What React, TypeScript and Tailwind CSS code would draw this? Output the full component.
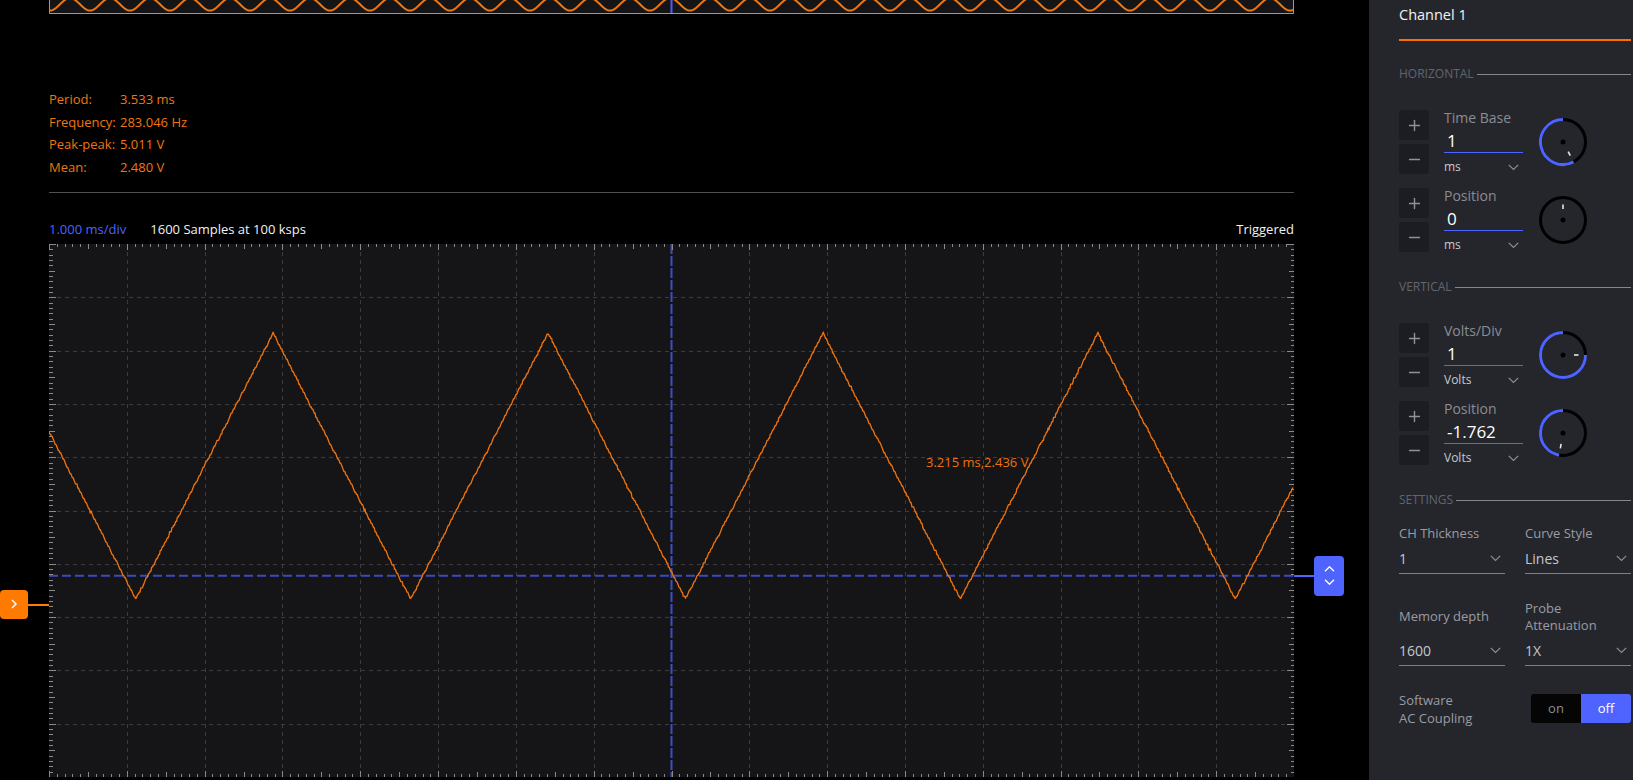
import { Plus, Minus } from 'lucide-react';

const W = 1245;
const H = 533;
const DX = W / 16;
const DY = H / 10;
const ZERO_Y = 360.5;

function buildWave() {
  let seed = 11;
  const rnd = () => {
    seed = (seed * 16807) % 2147483647;
    return seed / 2147483647;
  };
  const pts: string[] = [];
  for (let i = 0; i < 1600; i++) {
    const t = i * 0.01;
    let p = ((t - 1.114) / 3.533) % 1;
    if (p < 0) p += 1;
    const tri = p < 0.5 ? 2 * p : 2 - 2 * p;
    let v = 0.1 + 4.99 * tri + (rnd() - 0.5) * 0.035;
    v = Math.round(v / 0.039) * 0.039;
    pts.push(`${(t * DX).toFixed(2)},${(ZERO_Y - v * DY).toFixed(2)}`);
  }
  return pts.join(' ');
}

function buildMini() {
  const pts: string[] = [];
  for (let x = 0; x <= W; x += 1) {
    const phi = (2 * Math.PI * (x - 1)) / 40;
    pts.push(`${x},${(10.5 - 6.2 * (1 - Math.cos(phi))).toFixed(2)}`);
  }
  return pts.join(' ');
}

const wave = buildWave();
const mini = buildMini();

function Knob({ angle }: { angle: number }) {
  const c = 25;
  const r = 22.5;
  const rad = (a: number) => (a * Math.PI) / 180;
  const pt = (a: number, rr: number) => [c + rr * Math.cos(rad(a)), c + rr * Math.sin(rad(a))];
  const sweep = (((270 - angle) % 360) + 360) % 360;
  const [sx, sy] = pt(angle, r);
  const [ex, ey] = pt(270, r);
  const [t1x, t1y] = pt(angle, 11);
  const [t2x, t2y] = pt(angle, 15.5);
  return (
    <svg width="50" height="50" viewBox="0 0 50 50">
      <circle cx={c} cy={c} r={r} fill="none" stroke="#000" strokeWidth="3" />
      {sweep > 0 && (
        <path
          d={`M ${sx} ${sy} A ${r} ${r} 0 ${sweep > 180 ? 1 : 0} 1 ${ex} ${ey}`}
          fill="none"
          stroke="#4f63ff"
          strokeWidth="3"
        />
      )}
      <circle cx={c} cy={c} r="2.5" fill="#000" />
      <line x1={t1x} y1={t1y} x2={t2x} y2={t2y} stroke="#e6e6e6" strokeWidth="1.6" />
    </svg>
  );
}

function Chevron() {
  return (
    <svg width="11" height="7" viewBox="0 0 11 7">
      <polyline points="0.8,0.8 5.5,5.5 10.2,0.8" fill="none" stroke="#8d8f95" strokeWidth="1.2" />
    </svg>
  );
}

function Section({ title }: { title: string }) {
  return (
    <div className="flex items-center gap-[3px] text-[12px] leading-[16px] uppercase text-[#62656e]">
      <span>{title}</span>
      <div className="h-px flex-1 bg-[#85878c]" />
    </div>
  );
}

function Control({ label, value, unit, angle }: { label: string; value: string; unit: string; angle: number }) {
  return (
    <div className="flex h-[64px] items-center">
      <div className="flex flex-col gap-[4px]">
        <button className="flex h-[30px] w-[30px] items-center justify-center rounded-[3px] bg-[#1c1d22] text-[#909298]">
          <Plus size={17} strokeWidth={2} />
        </button>
        <button className="flex h-[30px] w-[30px] items-center justify-center rounded-[3px] bg-[#1c1d22] text-[#909298]">
          <Minus size={17} strokeWidth={2} />
        </button>
      </div>
      <div className="ml-[15px] mt-[-1px] w-[79px] self-start">
        <div className="text-[14px] leading-[18px] text-[#8a8c92]">{label}</div>
        <div className="mt-[3px] h-[23px] border-b border-[#4f63ff] pl-[3px] text-[17px] leading-[22px] text-white">
          {value}
        </div>
        <div className="mt-[6px] flex h-[16px] items-center justify-between pr-[4px] text-[12px] leading-[16px] text-[#c8c9cd]">
          <span>{unit}</span>
          <Chevron />
        </div>
      </div>
      <div className="ml-[15px]">
        <Knob angle={angle} />
      </div>
    </div>
  );
}

function Select({ value }: { value: string }) {
  return (
    <div className="mt-[6px] flex h-[25px] items-start justify-between border-b border-[#7d7f85] pr-[4px] text-[14px] leading-[20px] text-[#c5c6ca]">
      <span>{value}</span>
      <span className="flex h-[20px] items-center">
        <Chevron />
      </span>
    </div>
  );
}

function PlotSvg() {
  const lines: JSX.Element[] = [];
  for (let i = 0; i <= 160; i++) {
    const x = Math.round((i * DX) / 10) + 0.5;
    const len = i % 10 === 0 ? 6 : i % 5 === 0 ? 5 : 3;
    lines.push(<line key={`t${i}`} x1={x} y1={0} x2={x} y2={len} />);
    lines.push(<line key={`b${i}`} x1={x} y1={H} x2={x} y2={H - len} />);
  }
  for (let j = 0; j <= 100; j++) {
    const y = Math.round((j * DY) / 10) + 0.5;
    const len = j % 10 === 0 ? 7 : j % 5 === 0 ? 5.5 : 3.5;
    lines.push(<line key={`l${j}`} x1={0} y1={y} x2={len} y2={y} />);
    lines.push(<line key={`r${j}`} x1={W} y1={y} x2={W - len} y2={y} />);
  }
  const grid: JSX.Element[] = [];
  for (let k = 1; k < 16; k++) {
    if (k === 8) continue;
    const x = Math.round(k * DX) + 0.5;
    grid.push(<line key={`gv${k}`} x1={x} y1={0} x2={x} y2={H} />);
  }
  for (let k = 1; k < 10; k++) {
    const y = Math.round(k * DY) + 0.5;
    grid.push(<line key={`gh${k}`} x1={0} y1={y} x2={W} y2={y} />);
  }
  return (
    <svg width={W} height={H} viewBox={`0 0 ${W} ${H}`} className="block">
      <rect width={W} height={H} fill="#151517" />
      <g stroke="#3c3c3e" strokeWidth="1" strokeDasharray="4 4" shapeRendering="crispEdges">
        {grid}
      </g>
      <line x1={8 * DX} y1={0} x2={8 * DX} y2={H} stroke="#3d4fc8" strokeWidth="2" strokeDasharray="10 2" />
      <line x1={0} y1={331.7} x2={W} y2={331.7} stroke="#3b4bbf" strokeWidth="2" strokeDasharray="9 4" />
      <g stroke="#8a8a8c" strokeWidth="1" shapeRendering="crispEdges">
        {lines}
      </g>
      <polyline points={wave} fill="none" stroke="#f0740f" strokeWidth="1.3" strokeLinejoin="round" />
    </svg>
  );
}

export default function App() {
  return (
    <div className="flex h-[780px] w-[1633px] overflow-hidden bg-black font-['Open_Sans',sans-serif]">
      <div className="flex w-[1369px] shrink-0 flex-col pl-[49px] pr-[75px]">
        <svg width={W} height="14" viewBox={`0 0 ${W} 14`} className="block">
          <rect width={W} height="14" fill="#151517" />
          <polyline points={mini} fill="none" stroke="#f07810" strokeWidth="2" />
          <line x1="622.5" y1="0" x2="622.5" y2="13" stroke="#4a5cff" strokeWidth="2" />
          <polyline points={`0.5,0 0.5,13.5 ${W - 0.5},13.5 ${W - 0.5},0`} fill="none" stroke="#8796d8" strokeWidth="1" />
        </svg>

        <div className="mt-[74px] grid grid-cols-[71px_auto] text-[13px] leading-[22.6px] text-[#ef7610]">
          <span>Period:</span>
          <span>3.533 ms</span>
          <span>Frequency:</span>
          <span>283.046 Hz</span>
          <span>Peak-peak:</span>
          <span>5.011 V</span>
          <span>Mean:</span>
          <span>2.480 V</span>
        </div>

        <div className="mt-[14px] h-px bg-[#505050]" />

        <div className="mt-[27px] flex text-[13px] leading-[18px]">
          <span className="text-[#4d62ff]">1.000 ms/div</span>
          <span className="ml-[24px] text-[#f2f2f2]">1600 Samples at 100 ksps</span>
          <span className="ml-auto text-[#f2f2f2]">Triggered</span>
        </div>

        <div className="relative mt-[5.5px] h-[533px] w-[1245px]">
          <PlotSvg />
          <div className="absolute left-[877px] top-[209px] text-[13px] leading-[18px] text-[#ea7210]">
            3.215 ms,2.436 V
          </div>
          <div className="absolute left-[-21px] top-[360px] h-[2px] w-[21px] bg-[#ff7a00]" />
          <div className="absolute left-[-49px] top-[346px] flex h-[29px] w-[28px] items-center justify-center rounded-[4px] bg-[#ff7a00]">
            <svg width="6" height="10" viewBox="0 0 6 10">
              <polyline points="1,1 5,5 1,9" fill="none" stroke="#fff" strokeWidth="1.5" />
            </svg>
          </div>
          <div className="absolute left-[1245px] top-[331px] h-[2px] w-[20px] bg-[#4f63ff]" />
          <div className="absolute left-[1265px] top-[312px] flex h-[40px] w-[30px] flex-col items-center justify-center gap-[7px] rounded-[4px] bg-[#4f63ff]">
            <svg width="11" height="6" viewBox="0 0 11 6">
              <polyline points="1,5.2 5.5,0.8 10,5.2" fill="none" stroke="#fff" strokeWidth="1.4" />
            </svg>
            <svg width="11" height="6" viewBox="0 0 11 6">
              <polyline points="1,0.8 5.5,5.2 10,0.8" fill="none" stroke="#fff" strokeWidth="1.4" />
            </svg>
          </div>
        </div>
      </div>

      <div className="flex h-[780px] w-[264px] shrink-0 flex-col bg-[#25262c] pl-[30px] pr-[2px]">
        <div className="h-[41px] border-b-2 border-[#ff6f00] pt-[5px] text-[14.5px] leading-[20px] text-[#f2f2f2]">
          Channel 1
        </div>

        <div className="mt-[25px]">
          <Section title="Horizontal" />
        </div>
        <div className="mt-[28px] flex flex-col gap-[14px]">
          <Control label="Time Base" value="1" unit="ms" angle={62} />
          <Control label="Position" value="0" unit="ms" angle={270} />
        </div>

        <div className="mt-[27px]">
          <Section title="Vertical" />
        </div>
        <div className="mt-[28px] flex flex-col gap-[14px]">
          <Control label="Volts/Div" value="1" unit="Volts" angle={0} />
          <Control label="Position" value="-1.762" unit="Volts" angle={100} />
        </div>

        <div className="mt-[27px]">
          <Section title="Settings" />
        </div>

        <div className="mt-[17px] grid grid-cols-2 gap-x-[20px] text-[13px] leading-[17.6px] text-[#9a9ca3]">
          <div>
            <div>CH Thickness</div>
            <Select value="1" />
          </div>
          <div>
            <div>Curve Style</div>
            <Select value="Lines" />
          </div>
        </div>

        <div className="mt-[26px] grid grid-cols-2 gap-x-[20px] text-[13px] leading-[17.6px] text-[#9a9ca3]">
          <div>
            <div className="flex h-[35.2px] items-center">Memory depth</div>
            <Select value="1600" />
          </div>
          <div>
            <div className="h-[35.2px]">
              Probe
              <br />
              Attenuation
            </div>
            <Select value="1X" />
          </div>
        </div>

        <div className="mt-[25px] flex items-center justify-between">
          <div className="text-[13px] leading-[18px] text-[#9a9ca3]">
            Software
            <br />
            AC Coupling
          </div>
          <div className="mt-[-1px] flex h-[29px] w-[100px] overflow-hidden rounded-[3px] text-[13px]">
            <div className="flex w-1/2 items-center justify-center bg-[#050505] text-[#8b8c90]">on</div>
            <div className="flex w-1/2 items-center justify-center bg-[#4f63ff] text-white">off</div>
          </div>
        </div>
      </div>
    </div>
  );
}
